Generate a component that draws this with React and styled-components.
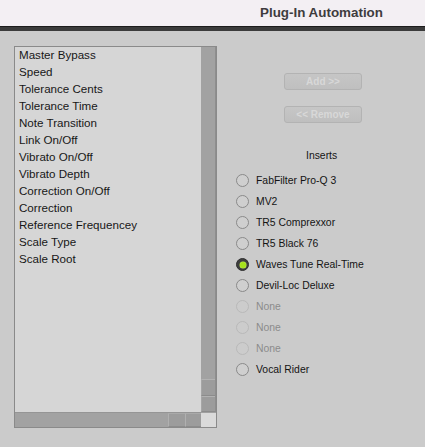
import React from "react";
import styled, { createGlobalStyle } from "styled-components";

const Global = createGlobalStyle`
  * { box-sizing: border-box; }
  html, body { margin: 0; padding: 0; background: #cbcbcb; }
  body { font-family: "Liberation Sans", Arial, Helvetica, sans-serif; }
`;

const Window = styled.div`
  width: 425px;
  height: 447px;
  overflow: hidden;
  display: flex;
  flex-direction: column;
  background: #cbcbcb;
`;

const TitleBar = styled.div`
  height: 26px;
  flex: none;
  background: #f3eff3;
  display: flex;
  align-items: center;
  padding-left: 260px;
  font-size: 13.4px;
  font-weight: bold;
  color: #3e3c3e;
  line-height: 26px;
`;

const Divider = styled.div`
  height: 5px;
  flex: none;
  background: #3b3b3b;
  border-top: 1px solid #1c1c1c;
`;

const Content = styled.div`
  flex: 1;
  display: flex;
  padding: 15px 0 0 14px;
  align-items: flex-start;
`;

const ListBox = styled.div`
  width: 203px;
  height: 382px;
  border: 1px solid #8a8a8a;
  display: grid;
  grid-template-columns: 1fr 15px;
  grid-template-rows: 1fr 15px;
  background: #d6d6d6;
`;

const Items = styled.div`
  padding-left: 4px;
  overflow: hidden;
`;

const Item = styled.div`
  height: 17px;
  line-height: 15px;
  font-size: 11.6px;
  color: #161616;
  white-space: nowrap;
`;

const VScroll = styled.div`
  display: flex;
  flex-direction: column;
  background: #a1a1a1;
  border-right: 1px solid #8e8e8e;
`;

const HScroll = styled.div`
  display: flex;
  background: #a1a1a1;
  border-top: 1px solid #959595;
`;

const Track = styled.div`
  flex: 1;
  background: #a2a2a2;
`;

const ArrowButton = styled.div`
  flex: none;
  ${(p) => (p.$horizontal ? "width: 16.5px;" : "height: 16.5px;")}
  background: #9c9c9c;
  border-top: 1px solid ${(p) => (p.$horizontal ? "#a9a9a9" : "#b2b2b2")};
  border-left: 1px solid ${(p) => (p.$horizontal ? "#b0b0b0" : "#a6a6a6")};
  border-bottom: 1px solid #8c8c8c;
`;

const Corner = styled.div`
  background: #dadada;
  border-top: 1px solid #a0a0a0;
`;

const Side = styled.div`
  display: flex;
  flex-direction: column;
  align-items: flex-start;
  padding-left: 19px;
`;

const Button = styled.div`
  width: 78px;
  height: 17px;
  margin-left: 48px;
  margin-top: ${(p) => p.$top}px;
  border: 1px solid #b3b3b3;
  border-radius: 3px;
  background: linear-gradient(#c6c6c6, #bfbfbf);
  color: #d8d8d8;
  font-size: 10px;
  font-weight: bold;
  display: flex;
  align-items: center;
  justify-content: center;
  line-height: 15px;
`;

const Label = styled.div`
  margin-top: 25px;
  margin-left: 70px;
  font-size: 10.4px;
  line-height: 16px;
  color: #141414;
`;

const RadioList = styled.div`
  margin-top: 6px;
  display: flex;
  flex-direction: column;
`;

const RadioRow = styled.div`
  height: 21px;
  display: flex;
  align-items: center;
  gap: 7px;
  font-size: 10.4px;
  color: ${(p) => (p.$disabled ? "#8c8c8c" : "#141414")};
`;

const Circle = styled.span`
  width: 13px;
  height: 13px;
  border-radius: 50%;
  flex: none;
  display: flex;
  align-items: center;
  justify-content: center;
  border: 1px solid ${(p) => (p.$checked ? "#2e2e2e" : p.$disabled ? "#b9b9b9" : "#8a8a8a")};
  background: ${(p) => (p.$checked ? "#3e3e3e" : p.$disabled ? "#cccccc" : "#cfcfcf")};
`;

const Dot = styled.span`
  width: 6px;
  height: 6px;
  border-radius: 50%;
  background: #a6e21c;
  box-shadow: 0 0 0 0.5px #c4f050;
`;

const params = [
  "Master Bypass",
  "Speed",
  "Tolerance Cents",
  "Tolerance Time",
  "Note Transition",
  "Link On/Off",
  "Vibrato On/Off",
  "Vibrato Depth",
  "Correction On/Off",
  "Correction",
  "Reference Frequencey",
  "Scale Type",
  "Scale Root",
];

const inserts = [
  { name: "FabFilter Pro-Q 3" },
  { name: "MV2" },
  { name: "TR5 Comprexxor" },
  { name: "TR5 Black 76" },
  { name: "Waves Tune Real-Time", checked: true },
  { name: "Devil-Loc Deluxe" },
  { name: "None", disabled: true },
  { name: "None", disabled: true },
  { name: "None", disabled: true },
  { name: "Vocal Rider" },
];

export default function App() {
  return (
    <>
      <Global />
      <Window>
        <TitleBar>Plug-In Automation</TitleBar>
        <Divider />
        <Content>
          <ListBox>
            <Items>
              {params.map((p) => (
                <Item key={p}>{p}</Item>
              ))}
            </Items>
            <VScroll>
              <Track />
              <ArrowButton />
              <ArrowButton />
            </VScroll>
            <HScroll>
              <Track />
              <ArrowButton $horizontal />
              <ArrowButton $horizontal />
            </HScroll>
            <Corner />
          </ListBox>
          <Side>
            <Button $top={27}>Add &gt;&gt;</Button>
            <Button $top={16}>&lt;&lt; Remove</Button>
            <Label>Inserts</Label>
            <RadioList>
              {inserts.map((ins, i) => (
                <RadioRow key={i} $disabled={ins.disabled}>
                  <Circle $checked={ins.checked} $disabled={ins.disabled}>
                    {ins.checked && <Dot />}
                  </Circle>
                  {ins.name}
                </RadioRow>
              ))}
            </RadioList>
          </Side>
        </Content>
      </Window>
    </>
  );
}
